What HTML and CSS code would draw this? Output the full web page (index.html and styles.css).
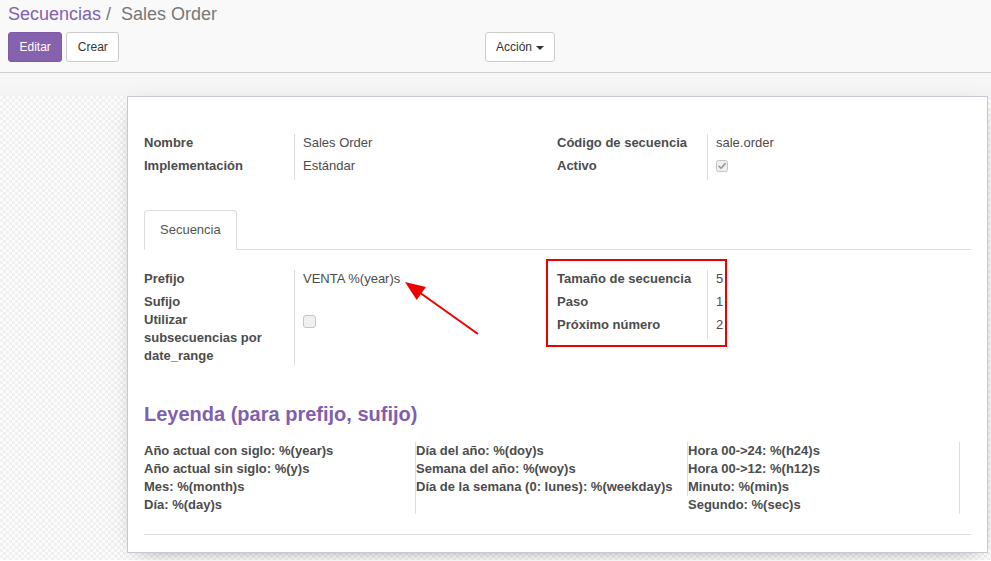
FILE: index.html
```
<!DOCTYPE html>
<html lang="es">
<head>
<meta charset="utf-8">
<title>Secuencias / Sales Order</title>
<link rel="stylesheet" href="styles.css">
</head>
<body>
<div class="cp">
  <div class="crumbs"><a class="crumb-link">Secuencias</a><span class="slash">/</span><span class="crumb-cur">Sales Order</span></div>
  <div class="cp-bar">
    <div class="cp-left">
      <button class="btn btn-primary">Editar</button>
      <button class="btn btn-default">Crear</button>
    </div>
    <div class="cp-right">
      <button class="btn btn-default">Acción <span class="caret"></span></button>
    </div>
  </div>
</div>
<div class="band"></div>
<div class="sheet-bg">
  <div class="sheet">
    <div class="group g-top">
      <div class="gcol">
        <div class="frow"><div class="lbl">Nombre</div><div class="val">Sales Order</div></div>
        <div class="frow"><div class="lbl">Implementación</div><div class="val">Estándar</div></div>
      </div>
      <div class="gcol">
        <div class="frow"><div class="lbl">Código de secuencia</div><div class="val">sale.order</div></div>
        <div class="frow"><div class="lbl">Activo</div><div class="val">
          <svg class="chk chk-on" width="12" height="12" viewBox="0 0 12 12"><rect x="0.5" y="0.5" width="11" height="11" rx="2" fill="#efefef" stroke="#c4c4c4"/><path d="M3 6.3 L5 8.3 L9.2 3.6" fill="none" stroke="#9a9a9a" stroke-width="1.6" stroke-linecap="round" stroke-linejoin="round"/></svg>
        </div></div>
      </div>
    </div>

    <div class="notebook">
      <ul class="tabs"><li class="tab active">Secuencia</li></ul>
    </div>

    <div class="group g-tab">
      <div class="gcol">
        <div class="frow"><div class="lbl">Prefijo</div><div class="val">VENTA %(year)s</div></div>
        <div class="frow short"><div class="lbl">Sufijo</div><div class="val"></div></div>
        <div class="frow multi"><div class="lbl">Utilizar subsecuencias por date_range</div><div class="val">
          <svg class="chk chk-off" width="13" height="13" viewBox="0 0 13 13"><rect x="0.5" y="0.5" width="12" height="12" rx="2.5" fill="#f0f0f0" stroke="#c6c6c6"/></svg>
        </div></div>
      </div>
      <div class="gcol">
        <div class="frow"><div class="lbl">Tamaño de secuencia</div><div class="val">5</div></div>
        <div class="frow"><div class="lbl">Paso</div><div class="val">1</div></div>
        <div class="frow"><div class="lbl">Próximo número</div><div class="val">2</div></div>
      </div>
    </div>

    <h2 class="legend-title">Leyenda (para prefijo, sufijo)</h2>
    <div class="legend">
      <div class="lcol">
        <div>Año actual con siglo: %(year)s</div>
        <div>Año actual sin siglo: %(y)s</div>
        <div>Mes: %(month)s</div>
        <div>Día: %(day)s</div>
      </div>
      <div class="lcol">
        <div>Día del año: %(doy)s</div>
        <div>Semana del año: %(woy)s</div>
        <div>Día de la semana (0: lunes): %(weekday)s</div>
      </div>
      <div class="lcol">
        <div>Hora 00-&gt;24: %(h24)s</div>
        <div>Hora 00-&gt;12: %(h12)s</div>
        <div>Minuto: %(min)s</div>
        <div>Segundo: %(sec)s</div>
      </div>
    </div>
    <hr class="sheet-hr">

    <div class="annot-box"></div>
    <svg class="annot-arrow" width="859" height="454" viewBox="0 0 859 454">
      <line x1="350" y1="237" x2="292" y2="195.8" stroke="#ee0000" stroke-width="2"/>
      <polygon points="277,185 297.9,190.1 288.7,203.1" fill="#ee0000"/>
    </svg>
  </div>
</div>
</body>
</html>
```
FILE: styles.css
```
* { box-sizing: border-box; }
html, body { margin: 0; padding: 0; }
body {
  font-family: "Liberation Sans", Arial, sans-serif;
  font-size: 13px;
  color: #4c4c4c;
  background: #fff;
  overflow: hidden;
  height: 561px;
}

/* control panel */
.cp {
  background: #f9f9f9;
  border-bottom: 1px solid #cfcfcf;
  padding: 1px 8px 10px 8px;
  height: 73px;
}
.crumbs {
  font-size: 18px;
  line-height: 26px;
  white-space: nowrap;
}
.crumb-link { color: #8261b0; }
.slash { color: #777; padding: 0 10px 0 5px; }
.crumb-cur { color: #777; }
.cp-bar {
  display: flex;
  margin-top: 5px;
}
.cp-left {
  width: 477px;
  display: flex;
  gap: 4px;
}
.btn {
  font-family: "Liberation Sans", Arial, sans-serif;
  font-size: 12px;
  line-height: 18px;
  padding: 5px 10.5px;
  height: 30px;
  border-radius: 3px;
  border: 1px solid #ccc;
  margin: 0;
  cursor: pointer;
}
.btn-primary {
  background: #8562ad;
  border-color: #7d5aa4;
  color: #fff;
}
.btn-default {
  background: #fff;
  color: #333;
}
.cp-right .btn { padding: 5px 10px; }
.caret {
  display: inline-block;
  width: 0;
  height: 0;
  margin-left: 1px;
  vertical-align: middle;
  border-top: 4px solid #333;
  border-left: 4px solid transparent;
  border-right: 4px solid transparent;
}

.band {
  height: 24px;
  background: linear-gradient(#f8f8f8, #f3f3f3);
  border-bottom: 1px solid #ececec;
}

/* sheet background */
.sheet-bg {
  height: 464px;
  padding-left: 127px;
  background-color: #fbfbfb;
  background-image: repeating-conic-gradient(#efefef 0 25%, #fcfcfc 0 50%);
  background-size: 6px 6px;
  margin-top: -1px;
}
.sheet {
  position: relative;
  width: 861px;
  background: #fff;
  border: 1px solid #c8c8d3;
  box-shadow: 0 5px 20px -12px rgba(0,0,0,0.6);
  padding: 16px 16px 17px 16px;
}

/* groups */
.group {
  display: grid;
  grid-template-columns: 413px 413px;
}
.g-top { margin-top: 21px; }
.g-tab { margin-top: 20px; }
.frow {
  display: flex;
  height: 23px;
  line-height: 18px;
}
.frow.short { height: 18px; }
.frow.multi { height: 54px; }
.lbl {
  width: 151px;
  flex: none;
  border-right: 1px solid #dcdcdc;
  font-weight: bold;
  padding-right: 14px;
}
.val {
  padding-left: 8px;
  color: #4c4c4c;
}
.chk { display: block; }
.chk-on { margin-top: 3px; }
.chk-off { margin-top: 4px; }

/* notebook */
.notebook { margin-top: 30px; }
.tabs {
  list-style: none;
  margin: 0;
  padding: 0;
  display: flex;
  border-bottom: 1px solid #ddd;
  height: 40px;
}
.tab {
  padding: 10px 15px;
  line-height: 18px;
  height: 40px;
  border: 1px solid #ddd;
  border-bottom-color: transparent;
  border-radius: 4px 4px 0 0;
  background: #fff;
  color: #555;
  margin-bottom: -1px;
}

/* legend */
.legend-title {
  margin: 38px 0 0 0;
  font-size: 20px;
  line-height: 22px;
  font-weight: bold;
  color: #7f5fae;
}
.legend {
  margin-top: 17px;
  display: grid;
  grid-template-columns: 272px 272px 272px;
  align-items: start;
  font-weight: bold;
  line-height: 18px;
}
.lcol {
  border-right: 1px solid #dcdcdc;
  white-space: nowrap;
}
.sheet-hr {
  margin: 20px 0 0 0;
  border: 0;
  border-top: 1px solid #ddd;
  height: 0;
}

/* annotations drawn over the form */
.annot-box {
  position: absolute;
  left: 418px;
  top: 162px;
  width: 181px;
  height: 88px;
  border: 2px solid #ee0000;
}
.annot-arrow {
  position: absolute;
  left: 0;
  top: 0;
  pointer-events: none;
}
```
